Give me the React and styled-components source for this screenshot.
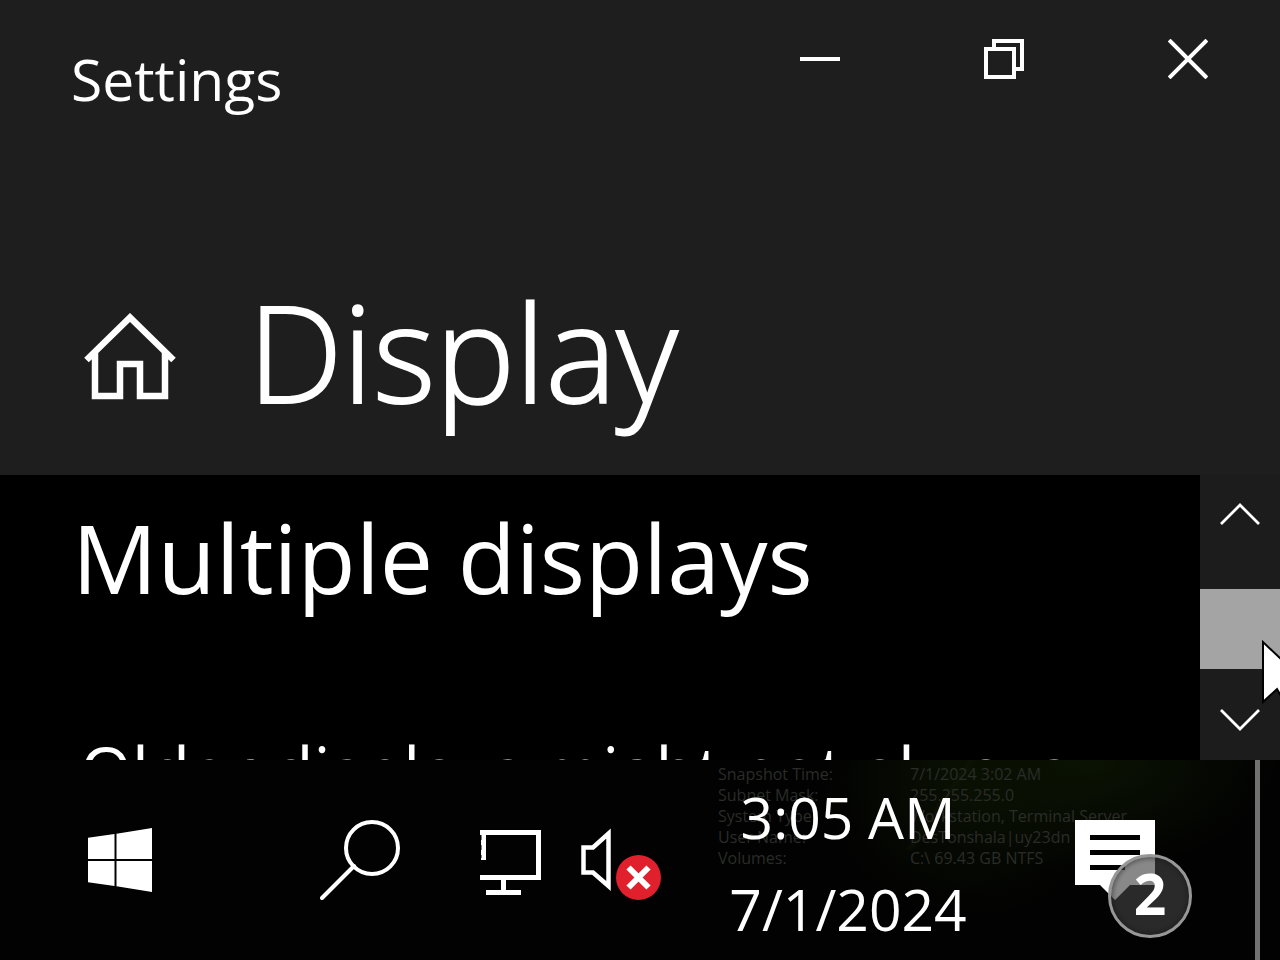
import React from "react";
import styled, { createGlobalStyle } from "styled-components";

const Global = createGlobalStyle`
  * { box-sizing: border-box; }
  body { margin: 0; background: #000; overflow: hidden; }
`;

const Screen = styled.div`
  height: 100vh;
  display: grid;
  grid-template-rows: auto 1fr auto;
  background: #000;
  color: #fff;
  font-family: "Open Sans", "Noto Sans", sans-serif;
  overflow: hidden;
  position: relative;
`;

const Header = styled.header`
  background: #1e1e1e;
`;

const TitleBar = styled.div`
  display: flex;
  justify-content: space-between;
  align-items: flex-start;
  padding-left: 71px;
`;

const AppName = styled.div`
  font-size: 57px;
  line-height: 80px;
  padding-top: 39px;
`;

const WindowControls = styled.div`
  display: flex;
`;

const PlainButton = styled.button`
  display: flex;
  align-items: center;
  justify-content: center;
  border: 0;
  padding: 0;
  margin: 0;
  background: transparent;
  color: inherit;
  font: inherit;
`;

const ControlButton = styled(PlainButton)`
  width: 184px;
  height: 118px;
`;

const PageHeading = styled.div`
  display: flex;
  align-items: center;
  margin-top: 119px;
  height: 237px;
  padding-left: 84px;
  gap: 72px;
`;

const PageTitle = styled.h1`
  margin: 0;
  padding-bottom: 12px;
  font-size: 134px;
  line-height: 200px;
  font-weight: 300;
  -webkit-text-stroke: 2px #fff;
`;

const Body = styled.main`
  display: grid;
  grid-template-columns: 1fr 80px;
  min-height: 0;
  overflow: hidden;
`;

const Content = styled.section`
  padding-left: 72px;
  overflow: hidden;
  min-height: 0;
  white-space: nowrap;
`;

const SectionTitle = styled.h2`
  margin: 0;
  font-size: 95px;
  line-height: 164px;
  font-weight: 400;
`;

const Hint = styled.p`
  margin: 91px 0 0;
  padding-left: 8px;
  font-size: 67px;
  line-height: 80px;
`;

const Scrollbar = styled.div`
  display: flex;
  flex-direction: column;
  background: #1c1c1c;
  overflow: hidden;
`;

const ArrowButton = styled(PlainButton)`
  height: 80px;
`;

const Track = styled.div`
  flex: 1;
  padding-top: 34px;
`;

const Thumb = styled.div`
  height: 80px;
  background: #a4a4a4;
`;

const Taskbar = styled.footer`
  display: flex;
  height: 200px;
  position: relative;
  background:
    linear-gradient(125deg, transparent 48%, #11180666 50%, transparent 53%) 860px 0 / 160px 90px no-repeat,
    radial-gradient(ellipse 190px 110px at 1090px 0, #0a1303, transparent),
    radial-gradient(ellipse 150px 140px at 970px 20px, #0a1003, transparent),
    #020202;
`;

const DesktopInfo = styled.table`
  position: absolute;
  left: 718px;
  top: 4px;
  border-collapse: collapse;
  font-size: 16px;
  line-height: 21px;
  font-weight: 500;
  color: #2a2c28;
  white-space: nowrap;
  text-align: left;
  th { width: 192px; font-weight: 500; }
  th, td { padding: 0; }
`;

const TaskButton = styled(PlainButton)`
  width: ${(p) => p.$width}px;
  position: relative;
`;

const Clock = styled(PlainButton)`
  flex-direction: column;
  justify-content: flex-start;
  width: 336px;
  padding-top: 11px;
  font-size: 57px;
  line-height: 92px;
  position: relative;
`;

const Spacer = styled.div`
  flex: 1;
`;

const NotifyButton = styled(TaskButton)`
  justify-content: flex-start;
  padding-left: 59px;
`;

const Badge = styled.span`
  position: absolute;
  left: 92px;
  top: 94px;
  width: 84px;
  height: 84px;
  border: 3px solid #979797;
  border-radius: 50%;
  background: rgba(40, 40, 40, 0.6);
  box-shadow: inset 0 0 4px 2px rgba(0, 0, 0, 0.4);
  font-size: 57px;
  line-height: 72px;
  font-weight: 700;
  text-align: center;
  &::before {
    content: "";
    position: absolute;
    inset: 0;
    border-radius: 50%;
    background: rgba(255, 255, 255, 0.08);
  }
`;

const ShowDesktop = styled(PlainButton)`
  width: 25px;
  border-left: 5px solid #717171;
`;

const Cursor = styled.svg`
  position: absolute;
  right: 0;
  top: 638px;
`;

const info = [
  ["Snapshot Time:", "7/1/2024 3:02 AM"],
  ["Subnet Mask:", "255.255.255.0"],
  ["System Type:", "Workstation, Terminal Server"],
  ["User Name:", "DesTonshala|uy23dn"],
  ["Volumes:", "C:\\ 69.43 GB NTFS"],
];

export default function App() {
  return (
    <Screen>
      <Global />
      <Header>
        <TitleBar>
          <AppName>Settings</AppName>
          <WindowControls>
            <ControlButton aria-label="Minimize">
              <svg width="40" height="40" viewBox="0 0 40 40"><path d="M0 20H40" stroke="#fff" strokeWidth="4" /></svg>
            </ControlButton>
            <ControlButton aria-label="Restore">
              <svg width="40" height="40" viewBox="0 0 40 40" fill="none" stroke="#fff" strokeWidth="4"><path d="M2 10H30V38H2ZM10 10V2H38V30H30" /></svg>
            </ControlButton>
            <ControlButton aria-label="Close">
              <svg width="40" height="40" viewBox="0 0 40 40"><path d="M2.500 2.500L37.500 37.500M37.500 2.500L2.500 37.500" stroke="#fff" strokeWidth="4" strokeLinecap="square" /></svg>
            </ControlButton>
          </WindowControls>
        </TitleBar>
        <PageHeading>
          <PlainButton aria-label="Home">
            <svg width="92" height="88" viewBox="0 0 92 88" fill="none" stroke="#fff" strokeWidth="6.500"><path d="M2.500 47L46 4.500L89.500 47M11 39V83H36V51H56V83H81V39" /></svg>
          </PlainButton>
          <PageTitle>Display</PageTitle>
        </PageHeading>
      </Header>
      <Body>
        <Content>
          <SectionTitle>Multiple displays</SectionTitle>
          <Hint>Older displays might not always</Hint>
        </Content>
        <Scrollbar>
          <ArrowButton aria-label="Scroll up">
            <svg width="40" height="24" viewBox="0 0 40 24"><path d="M1 21L20 2L39 21" fill="none" stroke="#fff" strokeWidth="2.800" /></svg>
          </ArrowButton>
          <Track><Thumb /></Track>
          <ArrowButton aria-label="Scroll down">
            <svg width="40" height="24" viewBox="0 0 40 24"><path d="M1 2L20 21L39 2" fill="none" stroke="#fff" strokeWidth="2.800" /></svg>
          </ArrowButton>
        </Scrollbar>
      </Body>
      <Taskbar>
        <DesktopInfo>
          <tbody>
            {info.map(([k, v]) => (
              <tr key={k}><th scope="row">{k}</th><td>{v}</td></tr>
            ))}
          </tbody>
        </DesktopInfo>
        <TaskButton $width={240} aria-label="Start">
          <svg width="64" height="64" viewBox="0 0 64 64" fill="#fff"><path d="M0 9.700L26.500 6V31H0ZM28.500 5.700L64 0V31H28.500ZM0 33H26.500V58L0 54.300ZM28.500 33H64V64L28.500 58.300Z" /></svg>
        </TaskButton>
        <TaskButton $width={240} aria-label="Search">
          <svg width="80" height="80" viewBox="0 0 80 80" fill="none" stroke="#fff" strokeWidth="4"><circle cx="52" cy="28" r="26" /><path d="M34 46L2 78" strokeLinecap="round" /></svg>
        </TaskButton>
        <TaskButton $width={80} aria-label="Network">
          <svg width="80" height="80" viewBox="0 0 80 80" fill="none" stroke="#fff" strokeWidth="5"><path d="M0 12.500H58.500V57.500H0M3.500 10V40M6 72.500H41M23.500 57.500V72.500" /><path d="M0 15H1.500V20H0ZM0 25H1.500V30H0ZM0 35H1.500V38H0Z" fill="#000" stroke="none" /></svg>
        </TaskButton>
        <TaskButton $width={120} aria-label="Volume, muted">
          <svg width="82" height="80" viewBox="0 0 82 80"><path d="M4.500 27.500H14L29.500 13.500V66L14 52.500H4.500Z" fill="none" stroke="#fff" strokeWidth="4.500" /><circle cx="59.500" cy="57.500" r="22.500" fill="#e0202c" /><path d="M49.500 47.500L69.500 67.500M69.500 47.500L49.500 67.500" stroke="#fff" strokeWidth="6" /></svg>
        </TaskButton>
        <Clock>
          <span>3:05 AM</span>
          <span>7/1/2024</span>
        </Clock>
        <Spacer />
        <NotifyButton $width={239} aria-label="Notifications, 2 new">
          <svg width="80" height="80" viewBox="0 0 80 80"><path d="M0 0H80V65H55L40 80L25 65H0Z" fill="#fff" /><path d="M15 17.500H65M15 32.500H65M15 47.500H50" stroke="#000" strokeWidth="5" /></svg>
          <Badge>2</Badge>
        </NotifyButton>
        <ShowDesktop aria-label="Show desktop" />
      </Taskbar>
      <Cursor width="18" height="68" viewBox="0 0 18 68"><path d="M1 4V64L15 51L20 60V22Z" fill="#fff" stroke="#000" strokeWidth="2" /></Cursor>
    </Screen>
  );
}
